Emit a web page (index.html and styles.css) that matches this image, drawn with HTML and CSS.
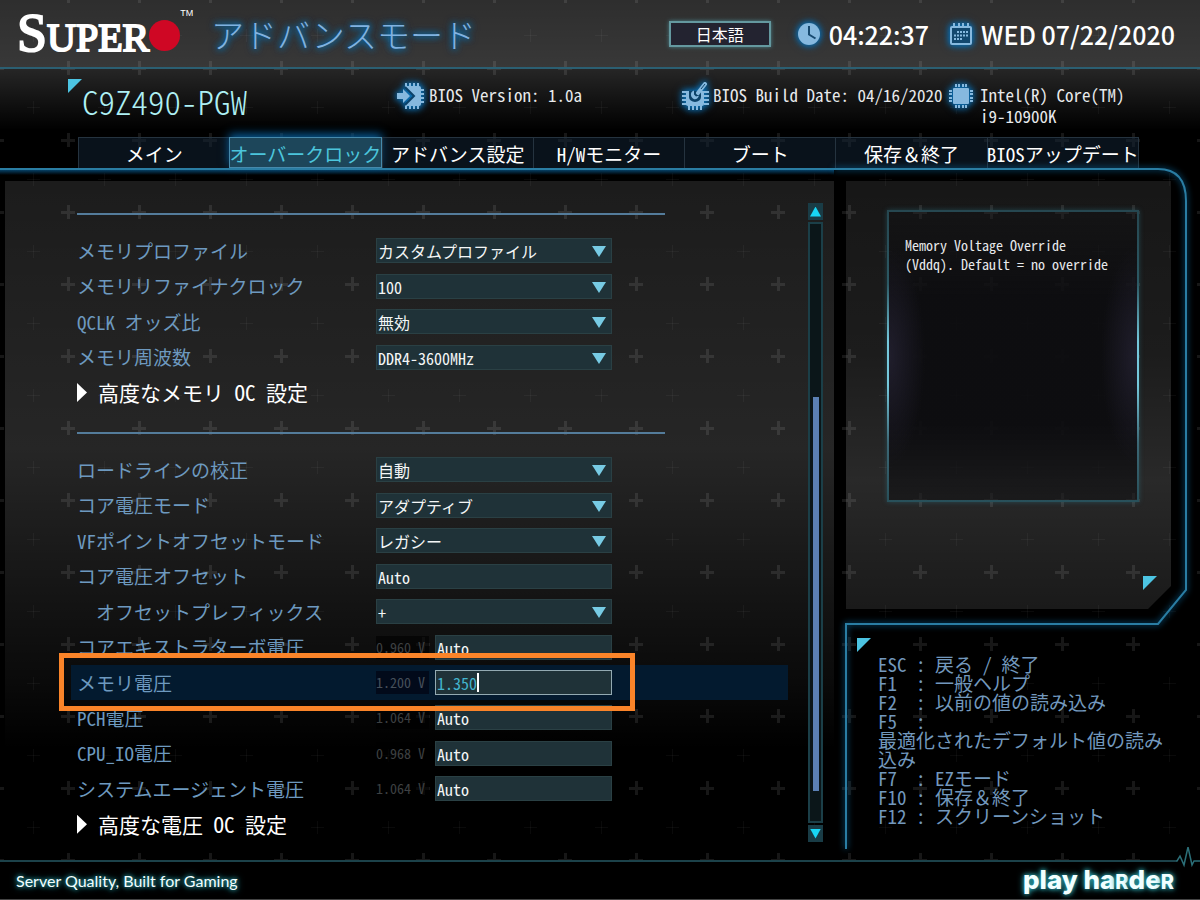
FILE: index.html
```
<!DOCTYPE html>
<html lang="ja">
<head>
    <meta charset="UTF-8">
    <meta name="viewport" content="width=device-width, initial-scale=1.0">
    <title>BIOS Setup - C9Z490-PGW</title>
    <link rel="stylesheet" href="styles.css">
</head>
<body>
    <header class="topbar">
        <div class="logo"><span class="logo-initial">S</span><span class="logo-rest">UPER</span><span class="logo-dot"></span><span class="logo-tm">TM</span></div>
        <h1>アドバンスモード</h1>
        <button class="language" type="button">日本語</button>
        <svg class="icon clock-icon" viewBox="0 0 24 24">
            <circle cx="12" cy="12" r="11" fill="#86b9df"/>
            <path d="M12 4v8.500l6.500 4" fill="none" stroke="#17496f" stroke-width="2"/>
        </svg>
        <time class="digits">04:22:37</time>
        <svg class="icon calendar-icon" viewBox="0 0 24 24">
            <path d="M1 6a2 2 0 0 1 2-2h18a2 2 0 0 1 2 2v15a2 2 0 0 1-2 2H3a2 2 0 0 1-2-2z" fill="#86b9df"/>
            <rect x="3" y="6" width="18" height="15" fill="#12486f"/>
            <path d="M5 1v4M10 1v4M14 1v4M19 1v4" stroke="#86b9df" stroke-width="2"/>
            <path d="M8 10h11M5 13.500h14M5 17h8" stroke="#86b9df" stroke-width="2" stroke-dasharray="2 1"/>
        </svg>
        <time class="digits">WED 07/22/2020</time>
    </header>

    <section class="board">
        <div class="board-name"><i class="corner"></i><h2>C9Z490-PGW</h2></div>
        <div class="info">
            <svg class="icon chip-icon" viewBox="0 0 28 28">
                <path d="M8 4h14a2 2 0 0 1 2 2v16a2 2 0 0 1-2 2H8v-1l9-9-9-9z" fill="#86b9df"/>
                <path d="M9 1v4M13 1v4M17 1v4M21 1v4M9 23v4M13 23v4M17 23v4M21 23v4M24 8h3M24 12h3M24 16h3M24 20h3" stroke="#86b9df" stroke-width="2"/>
                <path d="M8 5l9 9-9 9" fill="none" stroke="#0b4269" stroke-width="2"/>
                <path d="M0 11h6V7l7 7-7 7v-4H0z" fill="#86b9df"/>
            </svg>
            <p>BIOS Version: 1.0a</p>
        </div>
        <div class="info">
            <svg class="icon chip-icon" viewBox="0 0 28 28">
                <path d="M5 9h18v13a2 2 0 0 1-2 2H7a2 2 0 0 1-2-2z" fill="#86b9df"/>
                <path d="M8 23v5M12 23v5M16 23v5M20 23v5M1 10h5M1 14h5M1 18h5M1 22h5M23 10h5M23 14h5M23 18h5M23 22h5" stroke="#86b9df" stroke-width="2"/>
                <path d="M8 9v6a6 5 0 0 0 12 0V9z" fill="#0b4269"/>
                <path d="M17 11L24 2" stroke="#86b9df" stroke-width="4" stroke-linecap="round"/>
                <path d="M13 8.500c-3 1-4 4-2 7s6 2 7-2l-3 1-2-2z" fill="#86b9df"/>
                <path d="M20 7l4-5" stroke="#0b4269" stroke-width="1"/>
            </svg>
            <p>BIOS Build Date: 04/16/2020</p>
        </div>
        <div class="info">
            <svg class="icon chip-icon" viewBox="0 0 28 28">
                <rect x="5" y="6" width="16" height="16" rx="1" fill="#86b9df"/>
                <path d="M8 2v3M11 2v3M15 2v3M18 2v3M8 23v3M11 23v3M15 23v3M18 23v3M1 9h3M1 12h3M1 16h3M1 19h3M22 9h3M22 12h3M22 16h3M22 19h3" stroke="#86b9df" stroke-width="2"/>
            </svg>
            <p>Intel(R) Core(TM)<br>i9-10900K</p>
        </div>
    </section>

    <nav class="tabs">
        <a href="#main">メイン</a>
        <a href="#oc" class="active">オーバークロック</a>
        <a href="#advanced">アドバンス設定</a>
        <a href="#monitor">H/Wモニター</a>
        <a href="#boot">ブート</a>
        <a href="#save" class="wide">保存＆終了</a>
        <a href="#update">BIOSアップデート</a>
    </nav>

    <main>
        <div class="left">
            <form class="settings">
                <hr>
                <div class="row">
                    <label for="profile">メモリプロファイル</label>
                    <select id="profile"><option>カスタムプロファイル</option></select>
                </div>
                <div class="row">
                    <label for="refclock">メモリリファイナクロック</label>
                    <select id="refclock"><option>100</option></select>
                </div>
                <div class="row">
                    <label for="qclk">QCLK オッズ比</label>
                    <select id="qclk"><option>無効</option></select>
                </div>
                <div class="row">
                    <label for="memfreq">メモリ周波数</label>
                    <select id="memfreq"><option>DDR4-3600MHz</option></select>
                </div>
                <a class="row submenu" href="#memory-oc">高度なメモリ OC 設定</a>
                <hr class="second">
                <div class="row">
                    <label for="loadline">ロードラインの校正</label>
                    <select id="loadline"><option>自動</option></select>
                </div>
                <div class="row">
                    <label for="coremode">コア電圧モード</label>
                    <select id="coremode"><option>アダプティブ</option></select>
                </div>
                <div class="row">
                    <label for="vfmode">VFポイントオフセットモード</label>
                    <select id="vfmode"><option>レガシー</option></select>
                </div>
                <div class="row">
                    <label for="coreoffset">コア電圧オフセット</label>
                    <input type="text" id="coreoffset" value="Auto">
                </div>
                <div class="row">
                    <label for="prefix" class="indent">オフセットプレフィックス</label>
                    <select id="prefix"><option>+</option></select>
                </div>
                <div class="row">
                    <label for="turbo">コアエキストラターボ電圧</label>
                    <output>0.960 V</output>
                    <input type="text" id="turbo" value="Auto">
                </div>
                <div class="row selected">
                    <label for="memvolt">メモリ電圧</label>
                    <output>1.200 V</output>
                    <span class="edit"><input type="text" id="memvolt" value="1.350"><i class="caret"></i></span>
                    <i class="marker"></i>
                </div>
                <div class="row">
                    <label for="pch">PCH電圧</label>
                    <output>1.064 V</output>
                    <input type="text" id="pch" value="Auto">
                </div>
                <div class="row">
                    <label for="cpuio">CPU_IO電圧</label>
                    <output>0.968 V</output>
                    <input type="text" id="cpuio" value="Auto">
                </div>
                <div class="row">
                    <label for="sysagent">システムエージェント電圧</label>
                    <output>1.064 V</output>
                    <input type="text" id="sysagent" value="Auto">
                </div>
                <a class="row submenu" href="#voltage-oc">高度な電圧 OC 設定</a>
            </form>
            <div class="scrollbar">
                <button class="up" type="button" aria-label="上へ"></button>
                <div class="track"><div class="thumb"></div></div>
                <button class="down" type="button" aria-label="下へ"></button>
            </div>
        </div>

        <aside>
            <svg class="frame" viewBox="0 0 366 692">
                <path d="M0 2H324Q352 2 352 34V423L324 457H12V682" fill="none" stroke="#2a7da3" stroke-width="2"/>
            </svg>
            <div class="help">
                <p class="help-box">Memory Voltage Override (Vddq). Default = no override</p>
                <i class="corner"></i>
            </div>
            <div class="hotkeys">
                <i class="corner"></i>
                <ul>
                    <li><b>ESC</b><b>:</b>戻る / 終了</li>
                    <li><b>F1</b><b>:</b>一般ヘルプ</li>
                    <li><b>F2</b><b>:</b>以前の値の読み込み</li>
                    <li><b>F5</b><b>:</b><br>最適化されたデフォルト値の読み込み</li>
                    <li><b>F7</b><b>:</b>EZモード</li>
                    <li><b>F10</b><b>:</b><span class="wide">保存＆終了</span></li>
                    <li><b>F12</b><b>:</b>スクリーンショット</li>
                </ul>
            </div>
        </aside>
    </main>

    <footer>
        <svg class="pulse" viewBox="0 0 24 24">
            <path d="M0 14h1l3-5 4 9 4-18 4 18 2-4h6" fill="none" stroke="#2b6f78" stroke-width="1.500"/>
        </svg>
        <span class="slogan">Server Quality, Built for Gaming</span>
        <span class="play">play ha<small>R</small>de<small>R</small></span>
    </footer>
</body>
</html>
```
FILE: styles.css
```
* {
    box-sizing: border-box;
}
body {
    margin: 0;
    min-height: 100vh;
    display: flex;
    flex-direction: column;
    color: #e8eaec;
    font-family: "Noto Sans CJK JP", sans-serif;
    font-feature-settings: "hwid";
    font-size: 17px;
    background-color: #000;
    background-image: url("data:image/svg+xml,%3Csvg xmlns='http://www.w3.org/2000/svg' width='71' height='72'%3E%3Cpath d='M61 68.5h14M68.500 61v14M-10 68.500h14M68.500 -11v14' stroke='%23fff' stroke-opacity='.09' stroke-width='3'/%3E%3Cpath d='M27 35.500h13M33.500 29v13' stroke='%23fff' stroke-opacity='.04'/%3E%3C/svg%3E");
}
h1, h2, p, ul {
    margin: 0;
    padding: 0;
    font-weight: normal;
}
a {
    color: inherit;
    text-decoration: none;
}
.icon {
    flex: none;
    filter: drop-shadow(0 0 3px #0a70b4) drop-shadow(0 0 3px #0a5c96);
}
.corner {
    width: 14px;
    height: 14px;
    background: #4cc4e2;
    clip-path: polygon(0 0, 100% 0, 0 100%);
}
.wide {
    font-feature-settings: normal;
}

/* top bar */
.topbar {
    height: 69px;
    flex: none;
    display: flex;
    align-items: center;
    padding: 0 25px 0 17px;
    background: linear-gradient(rgba(255, 255, 255, .18), rgba(255, 255, 255, .22));
    border-bottom: 2px solid #2b5f72;
}
.logo {
    width: 194px;
    display: flex;
    align-items: baseline;
    padding-top: 4px;
    line-height: 60px;
    color: #fff;
    font-family: "Liberation Serif", serif;
    -webkit-text-stroke: 2px #fff;
}
.logo-initial {
    font-size: 54px;
}
.logo-rest {
    font-size: 40px;
}
.logo-dot {
    width: 31px;
    height: 31px;
    border-radius: 50%;
    background: #cf0724;
}
.logo-tm {
    align-self: flex-start;
    font: 9px/20px "Liberation Sans", sans-serif;
    -webkit-text-stroke: 0;
}
h1 {
    color: #80b2e0;
    font-size: 33px;
    line-height: 48px;
    font-weight: 300;
    text-shadow: 0 0 6px #0870b0, 0 0 6px #0870b0, 0 0 10px #0a5c96;
}
.language {
    width: 102px;
    height: 26px;
    margin-left: auto;
    padding: 0;
    color: #fff;
    background: #232330;
    border: 2px solid #64989f;
    box-shadow: 0 0 4px #4b828b;
    font: 16px/20px "Noto Sans CJK JP", sans-serif;
}
.clock-icon {
    width: 24px;
    margin-left: 26px;
}
.calendar-icon {
    width: 24px;
    margin-left: 20px;
}
.digits {
    margin-left: 8px;
    color: #fff;
    font-size: 25px;
    line-height: 32px;
    font-weight: 500;
    font-feature-settings: normal;
    white-space: nowrap;
}

/* board info */
.board {
    height: 68px;
    flex: none;
    display: grid;
    grid-template-columns: 1fr 284px 267px 252px;
    padding: 10px 0 0 68px;
    background: linear-gradient(rgba(255, 255, 255, .15), transparent 90%);
}
.board-name {
    display: flex;
}
.board-name h2 {
    color: #aef0f4;
    font-size: 33px;
    line-height: 44px;
    font-weight: 300;
}
.info {
    display: flex;
    gap: 4px;
    line-height: 21px;
    padding-top: 3px;
}
.info p {
    padding-top: 2px;
    white-space: nowrap;
}
.chip-icon {
    width: 28px;
    height: 28px;
}

/* tabs */
.tabs {
    height: 31px;
    flex: none;
    display: flex;
    margin: 0 61px 0 78px;
}
.tabs a {
    flex: 1 1 0;
    min-width: 0;
    display: flex;
    justify-content: center;
    color: #fff;
    font-size: 19px;
    line-height: 31px;
    white-space: nowrap;
    background: rgba(18, 36, 54, .5);
    border: 1px solid #25333f;
    border-width: 1px 0 0 1px;
}
.tabs a:last-child {
    border-right-width: 1px;
}
.tabs .active {
    color: #4cc5dc;
    background: #1d465a;
    border: 1px solid #4689ab;
    box-shadow: 0 -3px 9px #075c99;
}

/* main area */
main {
    flex: 1;
    display: grid;
    grid-template-columns: 1fr 366px;
}
.left {
    display: flex;
    position: relative;
    border-top: 2px solid #2a7da3;
    padding: 33px 11px 18px 71px;
}
.left::before {
    content: "";
    position: absolute;
    inset: 11px 0 10px 5px;
    background: linear-gradient(rgba(255, 255, 255, .11), rgba(255, 255, 255, .15) 40%, rgba(255, 255, 255, .04) 75%, transparent 85%);
}
.left::after {
    content: "";
    position: absolute;
    inset: 0 0 auto;
    height: 5px;
    background: linear-gradient(#064066, transparent);
}
.settings {
    position: relative;
    flex: 1;
    display: flex;
    flex-direction: column;
    margin-right: 20px;
    padding-top: 10px;
}
hr {
    width: 588px;
    height: 2px;
    margin: 0 0 18px 6px;
    border: 0;
    background: #547c9b;
}
hr.second {
    margin-top: 22px;
}
.row {
    position: relative;
    flex: 1;
    min-height: 35px;
    display: flex;
    align-items: center;
    padding-left: 6px;
}
label {
    width: 299px;
    color: #6d99bf;
    font-size: 19px;
    line-height: 24px;
    white-space: nowrap;
}
.indent {
    padding-left: 19px;
}
select, input {
    appearance: none;
    width: 236px;
    height: 25px;
    margin: 0;
    padding: 1px 1px 0;
    color: #f4f6f6;
    background-color: #1f3238;
    border: 1px solid #2a4044;
    border-radius: 0;
    outline: none;
    font: 16px/22px "Noto Sans CJK JP", sans-serif;
    font-feature-settings: "hwid";
}
select {
    background-image: url("data:image/svg+xml,%3Csvg xmlns='http://www.w3.org/2000/svg' width='14' height='11'%3E%3Cpath d='M0 0h14l-7 11z' fill='%2377cbe4'/%3E%3C/svg%3E");
    background-repeat: no-repeat;
    background-position: right 5px top 7px;
}
output {
    width: 53px;
    margin-right: 6px;
    color: #3e4042;
    background: rgba(0, 0, 0, .6);
    font-size: 14px;
    line-height: 23px;
    white-space: nowrap;
}
output + input, .edit input {
    width: 177px;
}
.edit {
    position: relative;
}
.edit input {
    display: block;
    color: #43b4cd;
    border-color: #93aab2;
}
.caret {
    position: absolute;
    left: 42px;
    top: 3px;
    width: 2px;
    height: 19px;
    background: #fff;
}
.selected {
    z-index: 1;
    background: #031a2f;
}
.selected output {
    background: #020a1a;
    color: #46505a;
}
.marker {
    position: absolute;
    inset: -12px 153px -11px -12px;
    border: 5px solid #fa8429;
}
.submenu {
    gap: 11px;
    color: #fff;
    font-size: 21px;
    line-height: 30px;
}
.submenu::before {
    content: "";
    width: 10px;
    height: 19px;
    background: #fff;
    clip-path: polygon(0 0, 100% 50%, 0 100%);
}

/* scrollbar */
.scrollbar {
    position: relative;
    width: 15px;
    display: flex;
    flex-direction: column;
    gap: 2px;
}
.scrollbar button {
    height: 17px;
    padding: 0;
    background: #193c46;
    border: 0;
}
.scrollbar button::before {
    content: "";
    display: block;
    width: 11px;
    height: 10px;
    margin: 0 auto;
    background: #18d6f5;
}
.up::before {
    clip-path: polygon(50% 0, 100% 100%, 0 100%);
}
.down::before {
    clip-path: polygon(0 0, 100% 0, 50% 100%);
}
.track {
    flex: 1;
    position: relative;
    background: #0b1619;
    border: 2px solid #1b3f48;
}
.thumb {
    position: absolute;
    top: 29%;
    bottom: 5%;
    left: 3px;
    width: 6px;
    background: #5b80b4;
}

/* right column */
aside {
    position: relative;
}
.frame {
    position: absolute;
    top: -1px;
    left: 0;
    width: 366px;
    height: 692px;
    filter: drop-shadow(0 0 3px #0876b5);
}
.help {
    position: relative;
    width: 325px;
    height: 428px;
    margin: 13px 0 0 12px;
    padding: 29px 32px 0 41px;
    background: linear-gradient(rgba(255, 255, 255, .09), rgba(255, 255, 255, .11) 40%, rgba(255, 255, 255, .16) 70%, rgba(255, 255, 255, .1));
    clip-path: polygon(0 0, 100% 0, 100% 405px, 302px 100%, 0 100%);
}
.help-box {
    height: 292px;
    padding: 24px 16px;
    font-size: 14px;
    line-height: 19px;
    border: 2px solid;
    border-image: linear-gradient(#264750, #2c5964 25%, #75c8dc 45%, #75c8dc 60%, #3c6775 80%, #28505a) 1;
    background: radial-gradient(ellipse 36px 110px at 0 50%, #201e2c, transparent), radial-gradient(ellipse 36px 110px at 100% 50%, #201e2c, transparent), linear-gradient(rgba(14, 14, 16, .4), rgba(12, 12, 15, .93) 30%, rgba(12, 12, 15, .93) 75%, rgba(18, 18, 20, .6));
    box-shadow: 0 0 5px rgba(50, 130, 150, .4);
}
.help .corner {
    position: absolute;
    right: 14px;
    bottom: 19px;
}
.hotkeys {
    position: relative;
    padding: 29px 24px 14px 23px;
}
.hotkeys .corner {
    display: block;
}
.hotkeys ul {
    margin: 2px 0 0 21px;
    color: #7298bd;
    font-size: 19px;
    line-height: 19px;
    list-style: none;
}
.hotkeys b {
    display: inline-block;
    width: 19px;
    font-weight: normal;
}
.hotkeys b:first-child {
    width: 38px;
}

/* footer */
footer {
    position: relative;
    height: 40px;
    flex: none;
    display: flex;
    align-items: center;
    justify-content: space-between;
    padding: 0 26px 0 16px;
    background: #000;
    border-top: 2px solid #1c424a;
    border-bottom: 1px solid #444;
    color: #f2ffff;
    text-shadow: 0 0 4px #2ba3ad, 0 0 7px #2ba3ad;
    font-feature-settings: normal;
}
.pulse {
    position: absolute;
    right: 0;
    top: -15px;
    width: 24px;
    height: 24px;
    background: #000;
}
.slogan {
    font: 16px/24px Lato, sans-serif;
}
.play {
    font: 800 26px/30px Inter, sans-serif;
}
.play small {
    font-size: 20px;
}
```
